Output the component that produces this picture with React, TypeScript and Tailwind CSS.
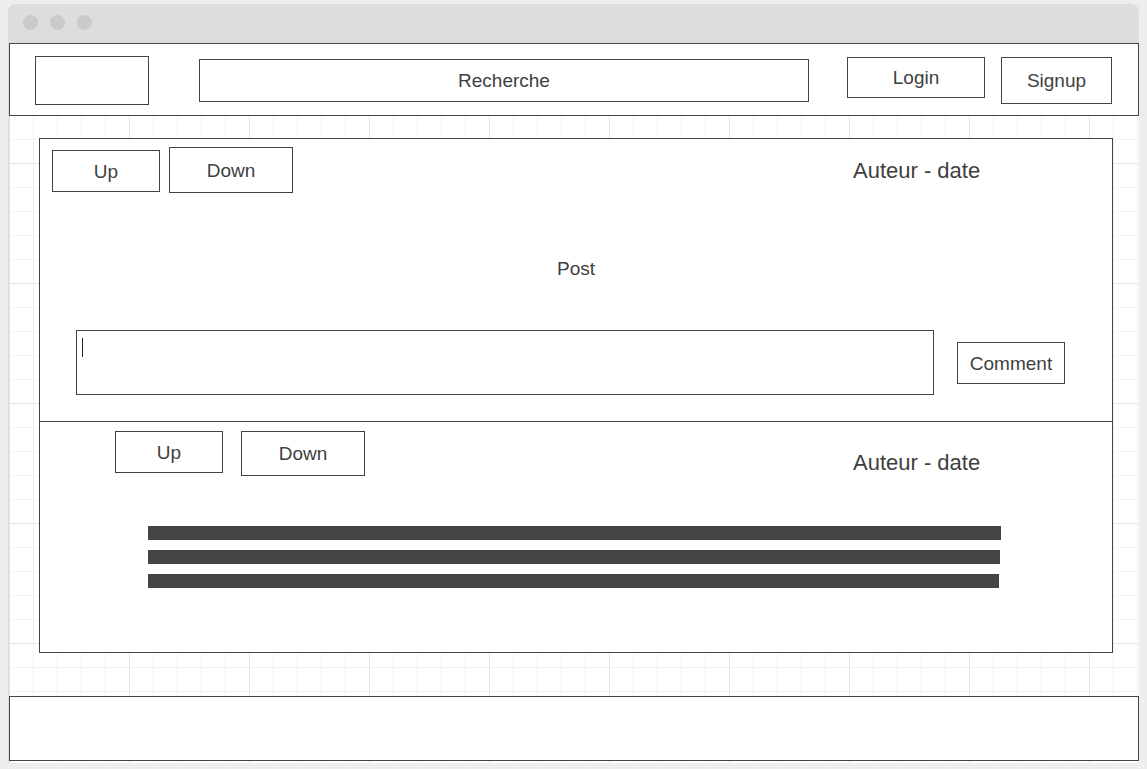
import React from 'react'

function Box({ className, children }: { className: string; children?: React.ReactNode }) {
  return (
    <div
      className={`flex shrink-0 items-center justify-center border border-[#444444] bg-white text-[19px] leading-[19px] ${className}`}
    >
      {children}
    </div>
  )
}

export default function App() {
  return (
    <div className="h-[769px] w-[1147px] overflow-hidden bg-[#eeeeee] pl-2 pt-1 font-['Liberation_Sans',Arial,sans-serif] text-[#404040]">
      <div className="w-[1131px] rounded-t-lg bg-[#dddddd]">
        {/* title bar */}
        <div className="flex h-[39px] items-start gap-3 pl-[15px] pt-[11px]">
          <span className="h-[15px] w-[15px] rounded-full bg-[#cacaca]" />
          <span className="h-[15px] w-[15px] rounded-full bg-[#cacaca]" />
          <span className="h-[15px] w-[15px] rounded-full bg-[#cacaca]" />
        </div>

        {/* page */}
        <div className="ml-px flex h-[720px] w-[1130px] flex-col bg-white bg-[linear-gradient(to_right,#e6e6e6_1px,transparent_1px),linear-gradient(to_bottom,#e6e6e6_1px,transparent_1px),linear-gradient(to_right,#f2f2f2_1px,transparent_1px),linear-gradient(to_bottom,#f2f2f2_1px,transparent_1px)] bg-[size:120px_120px,120px_120px,24px_24px,24px_24px]">
          {/* header */}
          <div className="flex h-[73px] shrink-0 items-start border border-[#444444] bg-white">
            <Box className="ml-[25px] mt-[12px] h-[49px] w-[114px]" />
            <Box className="ml-[50px] mt-[15px] h-[43px] w-[610px]">Recherche</Box>
            <Box className="ml-[38px] mt-[13px] h-[41px] w-[138px]">Login</Box>
            <Box className="ml-[16px] mt-[13px] h-[47px] w-[111px]">Signup</Box>
          </div>

          {/* post panel */}
          <div className="ml-[30px] mt-[22px] flex h-[515px] w-[1074px] shrink-0 flex-col border border-[#444444] bg-white">
            <div className="h-[283px] shrink-0 border-b border-[#444444]">
              <div className="flex items-start">
                <Box className="ml-[12px] mt-[11px] h-[42px] w-[108px]">Up</Box>
                <Box className="ml-[9px] mt-[8px] h-[46px] w-[124px]">Down</Box>
                <div className="ml-[560px] mt-[21px] whitespace-nowrap text-[22px] leading-[22px]">Auteur - date</div>
              </div>
              <div className="mt-[66px] text-center text-[19px] leading-[19px]">Post</div>
              <div className="mt-[52px] flex items-start">
                <div className="ml-[36px] h-[65px] w-[858px] shrink-0 border border-[#444444] pl-[5px] pt-[7px]">
                  <div className="h-[19px] w-px bg-[#222222]" />
                </div>
                <Box className="ml-[23px] mt-[12px] h-[42px] w-[108px]">Comment</Box>
              </div>
            </div>

            <div className="flex-1">
              <div className="flex items-start">
                <Box className="ml-[75px] mt-[9px] h-[42px] w-[108px]">Up</Box>
                <Box className="ml-[18px] mt-[9px] h-[45px] w-[124px]">Down</Box>
                <div className="ml-[488px] mt-[30px] whitespace-nowrap text-[22px] leading-[22px]">Auteur - date</div>
              </div>
              <div className="ml-[108px] mt-[50px] flex flex-col gap-[10px]">
                <div className="h-[14px] w-[853px] bg-[#444444]" />
                <div className="h-[14px] w-[852px] bg-[#444444]" />
                <div className="h-[14px] w-[851px] bg-[#444444]" />
              </div>
            </div>
          </div>

          {/* footer */}
          <div className="mt-[43px] h-[65px] shrink-0 border border-[#444444] bg-white" />
        </div>
      </div>
    </div>
  )
}
